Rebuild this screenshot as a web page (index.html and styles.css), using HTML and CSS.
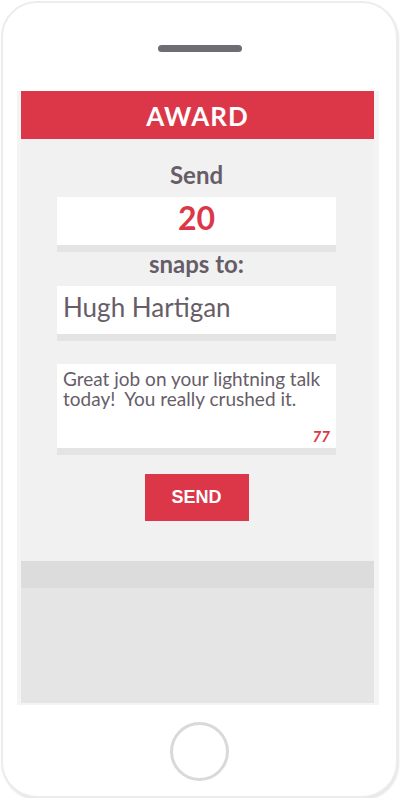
FILE: index.html
```html
<!DOCTYPE html>
<html>
<head>
<meta charset="utf-8">
<link rel="stylesheet" href="styles.css">
</head>
<body>
<div class="phone">
  <div class="speaker"></div>
  <div class="screen">
    <div class="header">AWARD</div>
    <div class="main">
      <div class="label">Send</div>
      <div class="box amount">20</div>
      <div class="label">snaps to:</div>
      <div class="box name">Hugh Hartigan</div>
      <div class="box message">
        <div class="msg-text">Great job on your lightning talk today!&nbsp; You really crushed it.</div>
        <div class="count">77</div>
      </div>
      <div class="send-btn">SEND</div>
    </div>
    <div class="strip"></div>
    <div class="bottom"></div>
  </div>
  <div class="home"></div>
</div>
</body>
</html>
```
FILE: styles.css
```css
* { box-sizing: border-box; }
html, body { margin: 0; padding: 0; background: #fff; }
body { font-family: Lato, "Noto Sans", sans-serif; }

.phone {
  width: 397px;
  height: 797px;
  margin: 1px 0 0 1px;
  border: 2px solid #ececee;
  border-radius: 36px;
  box-shadow: 1px 2px 2px rgba(0,0,0,0.10);
  background: #fff;
  display: flex;
  flex-direction: column;
}

.speaker {
  width: 84px;
  height: 7px;
  border-radius: 4px;
  background: #6d6d72;
  margin: 42px 0 0 155px;
}

.screen {
  width: 362px;
  height: 614px;
  margin: 39px 0 0 14px;
  background: #f4f4f4;
  padding: 0 5px 2px 4px;
  display: flex;
  flex-direction: column;
}

.header {
  height: 48px;
  background: #dc3749;
  color: #fff;
  font-weight: 700;
  font-size: 26px;
  letter-spacing: 1px;
  display: flex;
  align-items: center;
  justify-content: center;
  padding-top: 1px;
}

.main {
  height: 422px;
  background: #f1f1f1;
  display: flex;
  flex-direction: column;
  align-items: center;
  padding-top: 24px;
  padding-right: 2px;
}

.label {
  font-size: 24px;
  line-height: 24px;
  font-weight: 700;
  color: #675d68;
  margin-bottom: 10px;
}

.box {
  width: 279px;
  background: #fff;
  border-bottom: 7px solid #e4e4e4;
}

.amount {
  height: 55px;
  color: #dc3749;
  font-size: 32px;
  font-weight: 700;
  line-height: 1;
  display: flex;
  align-items: center;
  justify-content: center;
  padding-bottom: 6px;
}

.name {
  height: 55px;
  color: #675d68;
  font-size: 26px;
  line-height: 1;
  display: flex;
  align-items: center;
  padding: 0 0 6px 6px;
}

.message {
  margin-top: 23px;
  height: 91px;
  padding: 5px 6px 0 6px;
  color: #675d68;
  font-size: 19px;
  line-height: 20px;
  display: flex;
  flex-direction: column;
}

.msg-text { flex: 1; }

.count {
  align-self: flex-end;
  color: #dc3749;
  font-size: 15px;
  font-weight: 700;
  font-style: italic;
  line-height: 15px;
  margin-bottom: 4px;
}

.send-btn {
  margin-top: 19px;
  width: 104px;
  height: 47px;
  background: #dc3749;
  color: #fff;
  font-family: "Liberation Sans", Arial, sans-serif;
  font-weight: 700;
  font-size: 18px;
  display: flex;
  align-items: center;
  justify-content: center;
}

.strip {
  height: 27px;
  background: #dcdcdc;
}

.bottom {
  flex: 1;
  background: #e5e5e5;
}

.home {
  width: 59px;
  height: 59px;
  border: 3px solid #d9d9d9;
  border-radius: 50%;
  margin: 17px 0 0 167px;
}
```
